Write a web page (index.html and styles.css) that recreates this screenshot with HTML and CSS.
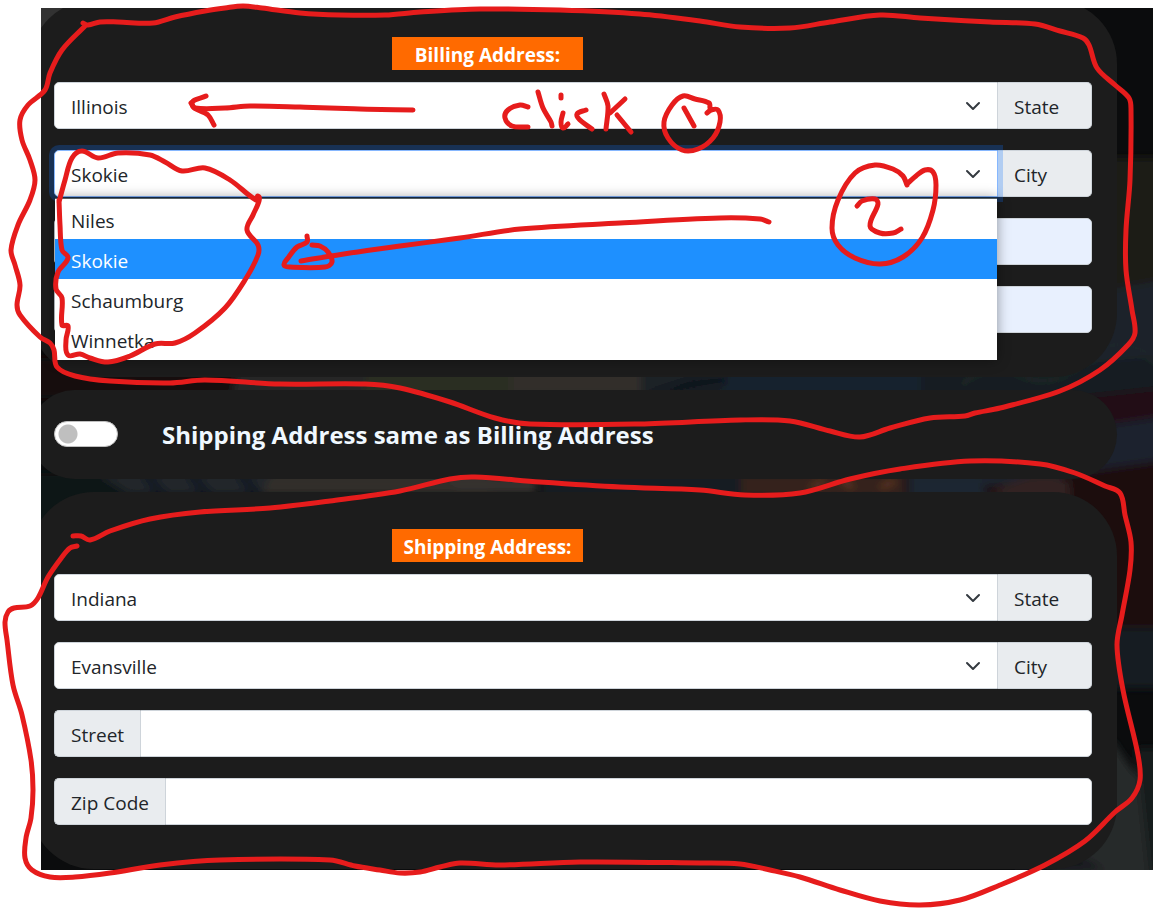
FILE: index.html
```html
<!DOCTYPE html>
<html lang="en">
<head>
<meta charset="utf-8">
<title>Checkout addresses</title>
<link rel="stylesheet" href="styles.css">
</head>
<body>
<main class="stage">
  <svg class="backdrop" viewBox="0 0 1112 862" preserveAspectRatio="none" aria-hidden="true">
    <defs><filter id="soft"><feGaussianBlur stdDeviation="4"/></filter></defs>
    <rect width="1112" height="862" fill="#0b0c0d"/>
    <g filter="url(#soft)">
      <path d="M-20 -20h80v60H-20z" fill="#303333"/>
      <path d="M-20 350h220v40H-20z" fill="#15100f"/>
      <path d="M200 350h140l-20 40H190z" fill="#262627"/>
      <path d="M330 350h170v40H320z" fill="#2c2f22"/>
      <path d="M470 350h160l-30 40H470z" fill="#302d2b"/>
      <path d="M600 350h120v40H600z" fill="#1d2127"/>
      <path d="M600 386l50-16 60-6-20 12-60 10z" fill="#11161d"/>
      <path d="M690 350h200v40H680z" fill="#19222d"/>
      <path d="M880 350h120v40H880z" fill="#161c20"/>
      <path d="M-20 465h110v80H-20z" fill="#111317"/>
      <path d="M55 465h260l-20 22H90z" fill="#22272b"/>
      <path d="M105 468l18 20M150 468l18 20M200 468l18 20" stroke="#111923" stroke-width="9"/>
      <path d="M230 465h220v22H220z" fill="#302f2b"/>
      <path d="M400 468h95v18H420z" fill="#35322f"/>
      <path d="M500 465h220v25H500z" fill="#171a20"/>
      <path d="M700 465h165v25H700z" fill="#36231b"/>
      <path d="M770 480l14-8M800 470l12 10M840 480l14-8" stroke="#74452a" stroke-width="3"/>
      <path d="M868 465h130v28H868z" fill="#1b2530"/>
      <path d="M1060 150h60v140l-60-10z" fill="#1a1c15"/>
      <path d="M1060 283l80-14v80l-120 24z" fill="#1c232c"/>
      <path d="M900 370l240-24v50l-150 20z" fill="#171d20"/>
      <path d="M920 378q25-25 60-10t70-18 70 12" stroke="#242b2b" stroke-width="3" fill="none"/>
      <path d="M990 394l150-16v28l-120 22z" fill="#220e12"/>
      <path d="M1010 425l130-19v48l-150 18z" fill="#1c232d"/>
      <path d="M940 478l200-28v190h-90z" fill="#1a090b"/>
      <path d="M950 484q50-28 78-10 6 36-24 36z" fill="#302024"/>
      <path d="M1070 620h70v60h-70z" fill="#161c21"/>
      <path d="M1070 730l20 30 52 50v72H1000l50-80z" fill="#282929"/>
      <path d="M1095 740h45v142h-30z" fill="#181a1b"/>
      <path d="M990 800l40 10-15 25 50 27h-90z" fill="#15191e"/>
    </g>
  </svg>

  <form class="panels">
    <section class="panel panel-address" aria-labelledby="billing-title">
      <h2 class="badge" id="billing-title">Billing Address:</h2>
      <div class="fields">
        <div class="group">
          <select class="control select" id="bill-state"><option>Illinois</option><option>Indiana</option></select>
          <label class="addon addon-end" for="bill-state">State</label>
        </div>
        <div class="group group-open">
          <select class="control select select-focus" id="bill-city"><option>Niles</option><option selected>Skokie</option><option>Schaumburg</option><option>Winnetka</option></select>
          <label class="addon addon-end" for="bill-city">City</label>
          <div class="menu-anchor">
            <ul class="menu" role="listbox" aria-label="City">
              <li class="option" role="option" aria-selected="false">Niles</li>
              <li class="option option-active" role="option" aria-selected="true">Skokie</li>
              <li class="option" role="option" aria-selected="false">Schaumburg</li>
              <li class="option" role="option" aria-selected="false">Winnetka</li>
            </ul>
          </div>
        </div>
        <div class="group">
          <input class="control text-filled" id="bill-street" type="text" aria-label="Billing street">
        </div>
        <div class="group">
          <input class="control text-filled" id="bill-zip" type="text" aria-label="Billing zip code">
        </div>
      </div>
    </section>

    <section class="panel panel-switch">
      <input class="switch" id="same" type="checkbox" role="switch">
      <label class="switch-label" for="same">Shipping Address same as Billing Address</label>
    </section>

    <section class="panel panel-address" aria-labelledby="shipping-title">
      <h2 class="badge" id="shipping-title">Shipping Address:</h2>
      <div class="fields">
        <div class="group">
          <select class="control select" id="ship-state"><option>Indiana</option><option>Illinois</option></select>
          <label class="addon addon-end" for="ship-state">State</label>
        </div>
        <div class="group">
          <select class="control select" id="ship-city"><option>Evansville</option></select>
          <label class="addon addon-end" for="ship-city">City</label>
        </div>
        <div class="group">
          <label class="addon" for="ship-street">Street</label>
          <input class="control" id="ship-street" type="text">
        </div>
        <div class="group">
          <label class="addon" for="ship-zip">Zip Code</label>
          <input class="control" id="ship-zip" type="text">
        </div>
      </div>
    </section>
  </form>
</main>
<svg class="ink" width="1153" height="910" viewBox="0 0 1153 910" aria-hidden="true"></svg>
<script src="ink.js"></script>
</body>
</html>
```
FILE: styles.css
```css
* { box-sizing: border-box; }

body {
  margin: 0;
  padding: 8px 0 40px 41px;
  background: #fff;
  color: #212529;
  font-family: "Open Sans", "Noto Sans", sans-serif;
  font-size: 19px;
  line-height: 30px;
  position: relative;
  overflow-x: hidden;
}

.stage { position: relative; overflow: hidden; }

.backdrop { position: absolute; inset: 0; width: 100%; height: 100%; }

.panels {
  position: relative;
  display: flex;
  flex-direction: column;
  gap: 13px;
  margin: -8px 36px 0 -11px;
  padding-bottom: 1px;
}

.panel { background: #1c1c1c; border-radius: 64px; padding: 0 25px 0 24px; }

.panel-address { padding-top: 37px; padding-bottom: 44px; }

.badge {
  width: 191px;
  margin: 0 0 12px 338px;
  padding: 3px 0 0;
  background: #ff6a00;
  color: #fff;
  font-size: 19px;
  line-height: 30px;
  font-weight: 700;
  text-align: center;
}

.fields { display: flex; flex-direction: column; gap: 21px; }

.group { display: flex; position: relative; height: 47px; }

.control, .addon { border: 1px solid #ced4da; border-radius: 5px; }

.control {
  flex: 1;
  min-width: 0;
  padding: 2px 16px 0;
  background-color: #fff;
  color: #212529;
  font: inherit;
  outline: 0;
}

.select {
  appearance: none;
  border-radius: 5px 0 0 5px;
  background-image: url("data:image/svg+xml,%3Csvg xmlns='http://www.w3.org/2000/svg' viewBox='0 0 16 16'%3E%3Cpath fill='none' stroke='%23343a40' stroke-linecap='round' stroke-linejoin='round' stroke-width='2' d='m2 5 6 6 6-6'/%3E%3C/svg%3E");
  background-repeat: no-repeat;
  background-position: right 16px center;
  background-size: 16px 16px;
}

.addon {
  display: flex;
  align-items: center;
  padding: 2px 16px 0;
  background: #e9ecef;
}

.addon:first-child { border-right: 0; border-radius: 5px 0 0 5px; }
.addon + .control { border-radius: 0 5px 5px 0; }
.addon-end { width: 94px; border-left: 0; border-radius: 0 5px 5px 0; }

.group-open { z-index: 2; }

.select-focus {
  position: relative;
  z-index: 1;
  border-color: #86b7fe;
  box-shadow: 0 0 0 5px rgba(13, 110, 253, .25);
}

.text-filled { background-color: #e8f0fe; }

.menu-anchor { position: absolute; z-index: 2; top: 48px; left: 1px; right: 95px; }

.menu {
  margin: 0;
  padding: 0 0 1px;
  list-style: none;
  background: #fff;
  border-top: 1px solid #555f5f;
  box-shadow: 0 0 12px rgba(0, 0, 0, .4);
}

.option { height: 40px; padding: 7px 16px 0; }
.option-active { background: #1e90ff; color: #fff; }

.panel-switch {
  display: flex;
  align-items: center;
  gap: 44px;
  height: 89px;
}

.switch {
  appearance: none;
  width: 64px;
  height: 26px;
  margin: 0 0 2px;
  border: 1px solid #bfbfbf;
  border-radius: 13px;
  background: #fff radial-gradient(circle at 13px 12px, #bfbfbf 9px, #fff 10px);
}

.switch-label { color: #f0f8ff; font-size: 24px; line-height: 32px; font-weight: 700; }

.ink {
  position: absolute;
  z-index: 5;
  top: 0;
  left: 0;
  pointer-events: none;
  fill: none;
  stroke: #e61c1c;
  stroke-width: 5;
  stroke-linecap: round;
  stroke-linejoin: round;
}
```
FILE: ink.js
```js
// Freehand strokes, each one a list of x,y points joined by a smooth curve.
const strokes = [
  "83,23 88,25 100,22 118,22 153,23 175,17 205,11 225,8 243,6 262,8 300,13 340,15 385,15 420,12 480,9 560,10 640,14 700,21 740,27 790,28 830,22 880,15 920,18 990,22 1035,24 1060,31 1083,38 1089,45 1097,68 1115,85 1129,98 1131,110 1130,180 1126,230 1126,270 1132,310 1135,333 1128,345 1100,370 1060,391 1000,408 975,413 965,416 930,418 890,428 860,437 830,431 790,421 740,420 640,424 530,424 495,418 450,402 400,388 365,384 280,384 205,380 170,383 110,381 75,376 57,367 54,350 50,343 40,337 20,315 17,305 20,285 15,265 11,250 18,225 30,200 35,180 30,160 22,140 20,120 28,105 45,90 50,73 62,50 85,26",
  "59,202 65,180 72,158 82,151 98,158 118,153 150,155 165,162 182,171 205,168 230,180 256,200 258,196 259,201 253,215 247,230 258,245 258,255 245,280 225,308 195,333 175,343 155,344 130,356 108,362 90,358 80,354 68,355 66,340 68,326 62,325 62,298 56,289 58,272 68,258 62,250 60,225 59,200",
  "73,536 81,536 90,540 110,531 150,519 200,512 270,508 330,501 400,491 450,479 475,477 540,482 620,487 700,490 745,495 800,493 850,479 900,469 970,461 1040,464 1075,473 1105,486 1120,493 1125,515 1131,542 1130,570 1122,615 1117,645 1123,690 1138,755 1140,780 1132,798 1115,812 1085,841 1045,865 1000,885 960,900 920,905 880,901 840,890 800,877 770,870 740,864 700,863 580,862 500,865 460,863 440,867 420,872 400,873 380,870 355,866 330,860 220,860 160,865 110,873 75,877 50,877 32,870 25,858 26,838 31,818 33,790 31,760 22,715 13,685 7,640 5,622 8,612 14,608 30,606 38,598 48,577 62,557 70,548 77,546",
  "413,110 360,109 300,107 250,106 225,108 195,108 191,103",
  "206,96 192,104 208,115 214,125",
  "528,107 520,105 508,110 505,118 512,126 528,127",
  "538,92 543,108 551,122 552,126",
  "563,113 561,122 563,128 568,124",
  "561,95 561,98",
  "586,110 577,114 580,120 592,129",
  "604,94 608,106 606,129",
  "625,99 610,113",
  "617,115 631,132",
  "710,108 709,103 695,99 683,96 672,105 664,122 668,138 682,150 698,149 713,138 720,122 718,110 711,110 707,113",
  "684,108 694,126",
  "907,185 903,176 893,169 875,165 855,173 838,200 832,228 838,245 855,258 880,264 903,257 922,238 933,210 936,185 933,172 925,170 916,176 908,183",
  "857,206 862,201 875,199 878,204 870,226 880,233 893,233 901,229",
  "769,222 760,219 720,218 620,223 520,229 460,238 400,246 350,253 301,261",
  "307,236 307,242 297,247 288,258 284,265 290,267 325,267 332,262 328,252 320,246 312,245"
];

// Catmull-Rom spline written as cubic Bezier segments. Tangents are scaled
// to the segment's own length so that uneven spacing never overshoots.
function curve(text) {
  const p = text.split(" ").map(pair => pair.split(",").map(Number));
  const tangent = (from, to, length) => {
    const dx = to[0] - from[0], dy = to[1] - from[1];
    const n = Math.hypot(dx, dy) || 1;
    return [dx / n * length / 3, dy / n * length / 3];
  };
  let d = "M" + p[0];
  for (let i = 0; i < p.length - 1; i++) {
    const a = p[i - 1] || p[i], b = p[i], c = p[i + 1], e = p[i + 2] || c;
    const length = Math.hypot(c[0] - b[0], c[1] - b[1]);
    const s = tangent(a, c, length), t = tangent(b, e, length);
    d += "C" + [b[0] + s[0], b[1] + s[1], c[0] - t[0], c[1] - t[1], c[0], c[1]].join(" ");
  }
  return d;
}

const ink = document.querySelector(".ink");
strokes.forEach(text => {
  const path = document.createElementNS("http://www.w3.org/2000/svg", "path");
  path.setAttribute("d", curve(text));
  ink.appendChild(path);
});
```
